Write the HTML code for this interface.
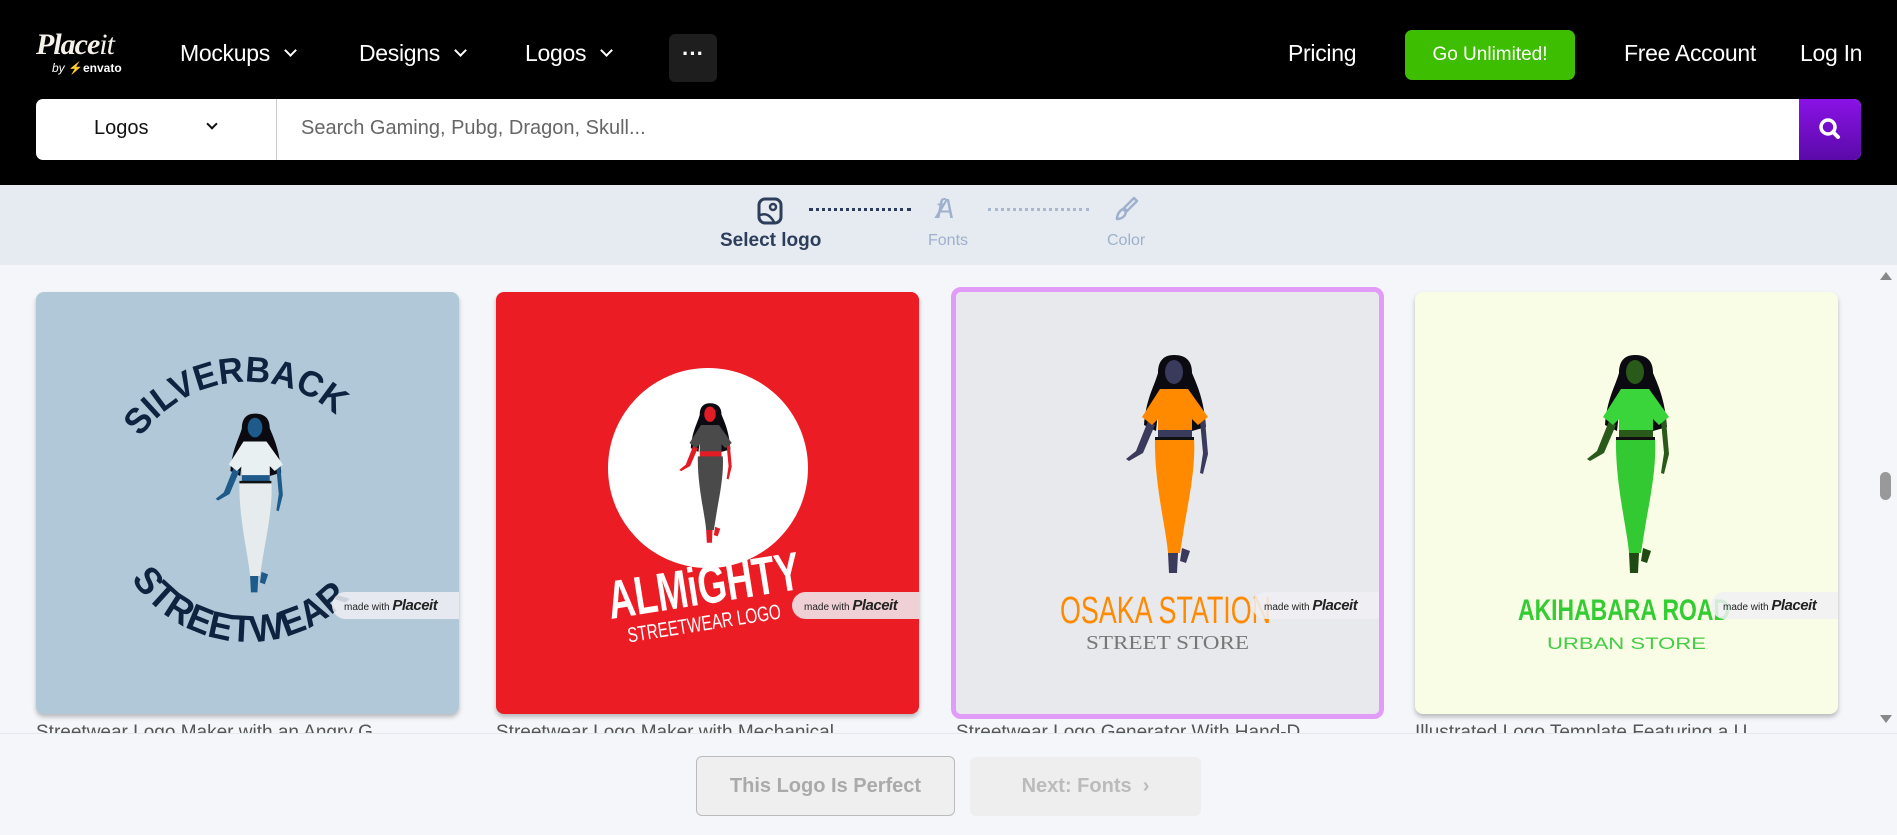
<!DOCTYPE html>
<html><head><meta charset="utf-8">
<style>
*{box-sizing:border-box;margin:0;padding:0}
body{width:1897px;height:835px;overflow:hidden;background:#f4f6fa;font-family:"Liberation Sans",sans-serif;position:relative}
.hdr{position:absolute;left:0;top:0;width:1897px;height:185px;background:#000}
.nav{position:absolute;top:40px;color:#fff;font-size:23px;letter-spacing:-0.3px}
.chev{display:inline-block;width:9px;height:9px;border-right:2px solid #fff;border-bottom:2px solid #fff;transform:rotate(45deg);margin-left:16px;position:relative;top:-6px}
.search{position:absolute;left:36px;top:99px;width:1825px;height:61px;background:#fff;border-radius:7px;overflow:hidden}
.steps{position:absolute;left:0;top:185px;width:1897px;height:80px;background:#e6ebf2}
.card{position:absolute;top:292px;width:423px;height:422px;border-radius:8px;overflow:hidden;box-shadow:0 3px 5px rgba(0,0,0,.25)}
.badge{position:absolute;right:0;top:300px;width:127px;height:27px;background:rgba(240,240,245,.85);border-radius:14px 0 0 14px;font-size:10px;color:#222;line-height:27px;padding-left:12px}
.badge b{font-size:15px;font-style:italic;letter-spacing:-.5px}
.title{position:absolute;top:722px;height:11px;overflow:hidden;font-size:19px;color:#555;white-space:nowrap;line-height:22px}
</style></head><body>
<div class="hdr">
 <div style="position:absolute;left:36px;top:30px;color:#f6f1e8;font-family:'Liberation Serif',serif;font-style:italic;font-weight:bold;font-size:30px;letter-spacing:-1px;line-height:30px">Place<span style="font-weight:normal">it</span></div>
 <div style="position:absolute;left:52px;top:61px;color:#fff;font-size:12px;font-weight:bold"><span style="font-weight:normal;font-style:italic">by</span> <span style="color:#82b541">⚡</span>envato</div>
 <div class="nav" style="left:180px">Mockups<span class="chev"></span></div>
 <div class="nav" style="left:359px">Designs<span class="chev"></span></div>
 <div class="nav" style="left:525px">Logos<span class="chev"></span></div>
 <div style="position:absolute;left:669px;top:34px;width:48px;height:48px;background:#1e1e1e;border-radius:6px;color:#fff;font-size:22px;text-align:center;line-height:40px;font-weight:bold">···</div>
 <div class="nav" style="left:1288px">Pricing</div>
 <div style="position:absolute;left:1405px;top:30px;width:170px;height:50px;background:#3dbe00;border-radius:7px;color:#fff;font-size:19px;text-align:center;line-height:50px">Go Unlimited!</div>
 <div class="nav" style="left:1624px">Free Account</div>
 <div class="nav" style="left:1800px">Log In</div>
 <div class="search">
  <div style="position:absolute;left:58px;top:18px;font-size:20px;color:#111">Logos</div>
  <div style="position:absolute;left:172px;top:21px;width:8px;height:8px;border-right:2px solid #111;border-bottom:2px solid #111;transform:rotate(45deg)"></div>
  <div style="position:absolute;left:240px;top:0;width:1px;height:61px;background:#ccc"></div>
  <div style="position:absolute;left:265px;top:18px;font-size:20px;color:#666">Search Gaming, Pubg, Dragon, Skull...</div>
  <div style="position:absolute;right:0;top:0;width:62px;height:61px;background:linear-gradient(#8a12e6,#5a0aa8)">
   <svg width="62" height="61" viewBox="0 0 62 61"><circle cx="29" cy="28" r="7" fill="none" stroke="#fff" stroke-width="3.5"/><path d="M34 33l5 5" stroke="#fff" stroke-width="4" stroke-linecap="round"/></svg>
  </div>
 </div>
</div>
<div class="steps">
 <svg style="position:absolute;left:756px;top:12px" width="28" height="28" viewBox="0 0 28 28"><rect x="3" y="2" width="22" height="24" rx="6" fill="none" stroke="#2c3e5a" stroke-width="3"/><circle cx="17" cy="10" r="3" fill="none" stroke="#2c3e5a" stroke-width="2.5"/><path d="M4 18c6-2 10 0 14 7" fill="none" stroke="#2c3e5a" stroke-width="2.5"/></svg>
 <div style="position:absolute;left:809px;top:23px;width:102px;border-top:3px dotted #2c3e5a"></div>
 <div style="position:absolute;left:720px;top:45px;font-size:19px;font-weight:bold;color:#2c3e5a">Select logo</div>
 <div style="position:absolute;left:936px;top:8px;font-size:28px;font-style:italic;color:#9eb0cc;letter-spacing:-8px">fA</div>
 <div style="position:absolute;left:928px;top:47px;font-size:16px;color:#9eb0cc">Fonts</div>
 <div style="position:absolute;left:988px;top:23px;width:101px;border-top:3px dotted #a9b8cf"></div>
 <svg style="position:absolute;left:1112px;top:10px" width="28" height="28" viewBox="0 0 28 28"><path d="M22 3l3 3-10 10-3-3z M11 14l3 3c-1 5-5 7-9 7 0-4 2-8 6-10z" fill="none" stroke="#9eb0cc" stroke-width="2.5" stroke-linejoin="round"/></svg>
 <div style="position:absolute;left:1107px;top:47px;font-size:16px;color:#9eb0cc">Color</div>
</div>

<!-- card 1 -->
<div class="card" style="left:36px;background:#b0c8d7">
 <svg width="423" height="422" viewBox="0 0 423 422">
  <defs><path id="a1" d="M100 152 A132 132 0 0 1 324 152"/><path id="a2" d="M92 282 A140 140 0 0 0 332 282"/></defs>
  <text font-family="Liberation Sans" font-weight="bold" font-size="36" fill="#0d2340"><textPath href="#a1" startOffset="8" textLength="222" lengthAdjust="spacingAndGlyphs">SILVERBACK</textPath></text>
  <text font-family="Liberation Sans" font-weight="bold" font-size="38" fill="#0d2340"><textPath href="#a2" startOffset="6" textLength="252" lengthAdjust="spacingAndGlyphs">STREETWEAR</textPath></text>
  <g transform="translate(178,120) scale(0.82)">
   <path d="M50 2c-12 0-16 8-16 18-4 14-12 26-14 52l12 6 4-38h28l4 38 14-4c-2-26-8-40-14-54 0-12-6-18-18-18z" fill="#0a0a10"/>
   <ellipse cx="50" cy="19" rx="9" ry="12" fill="#1e5a8a"/>
   <path d="M24 68l-12 30-10 8 3 2 14-8 12-28z M76 68l3 32-3 20 3 1 5-20-3-34z" fill="#1e5a8a"/>
   <path d="M34 76h34v10H34z" fill="#1e5a8a"/>
   <path d="M36 36h28l20 28-10 8-6-6v11H34V66l-6 6-10-8z" fill="#e9f0f2"/>
   <path d="M31 85h39c2 30-6 65-10 90l-4 25H44c-2-25-14-70-13-115z" fill="#e6ebee"/>
   <path d="M31 84h39v3H31z" fill="#111"/>
   <path d="M44 200h10l-1 20h-8z M58 195l8 3-4 12-6-2z" fill="#1e5a8a"/>
  </g>
 </svg>
 <div class="badge">made with <b>Placeit</b></div>
</div>
<!-- card 2 -->
<div class="card" style="left:496px;background:#ec1c24">
 <svg width="423" height="422" viewBox="0 0 423 422">
  <circle cx="212" cy="176" r="100" fill="#fff"/>
  <g transform="translate(182,110) scale(0.64)">
   <path d="M50 2c-12 0-16 8-16 18-4 14-12 26-14 52l12 6 4-38h28l4 38 14-4c-2-26-8-40-14-54 0-12-6-18-18-18z" fill="#0a0a10"/>
   <ellipse cx="50" cy="19" rx="9" ry="12" fill="#e21c24"/>
   <path d="M24 68l-12 30-10 8 3 2 14-8 12-28z M76 68l3 32-3 20 3 1 5-20-3-34z" fill="#e21c24"/>
   <path d="M34 76h34v10H34z" fill="#e21c24"/>
   <path d="M36 36h28l20 28-10 8-6-6v11H34V66l-6 6-10-8z" fill="#4a4a4a"/>
   <path d="M31 85h39c2 30-6 65-10 90l-4 25H44c-2-25-14-70-13-115z" fill="#4a4a4a"/>
   <path d="M44 200h10l-1 20h-8z M58 195l8 3-4 12-6-2z" fill="#e21c24"/>
  </g>
  <g transform="rotate(-9 209 308)">
   <text x="113" y="312" font-family="Liberation Sans" font-weight="bold" font-size="54" fill="#fff" textLength="194" lengthAdjust="spacingAndGlyphs">ALMiGHTY</text>
   <text x="127" y="338" font-family="Liberation Sans" font-size="21" fill="#fff" textLength="155" lengthAdjust="spacingAndGlyphs">STREETWEAR LOGO</text>
  </g>
 </svg>
 <div class="badge">made with <b>Placeit</b></div>
</div>
<!-- card 3 selected -->
<div style="position:absolute;left:951px;top:287px;width:433px;height:432px;border:5px solid #e09cf6;border-radius:10px"></div>
<div class="card" style="left:956px;background:#e8e9ec;box-shadow:none;border-radius:5px">
 <svg width="423" height="422" viewBox="0 0 423 422">
  <g transform="translate(168,61)">
   <path d="M50 2c-12 0-16 8-16 18-4 14-12 26-14 52l12 6 4-38h28l4 38 14-4c-2-26-8-40-14-54 0-12-6-18-18-18z" fill="#0a0a10"/>
   <ellipse cx="50" cy="19" rx="9" ry="12" fill="#3a3a5c"/>
   <path d="M24 68l-12 30-10 8 3 2 14-8 12-28z M76 68l3 32-3 20 3 1 5-20-3-34z" fill="#3a3a5c"/>
   <path d="M34 76h34v10H34z" fill="#3a3a5c"/>
   <path d="M36 36h28l20 28-10 8-6-6v11H34V66l-6 6-10-8z" fill="#ff8a00"/>
   <path d="M31 85h39c2 30-6 65-10 90l-4 25H44c-2-25-14-70-13-115z" fill="#ff8a00"/>
   <path d="M31 84h39v3H31z" fill="#111"/>
   <path d="M44 200h10l-1 20h-8z M58 195l8 3-4 12-6-2z" fill="#3a3a5c"/>
  </g>
  <text x="104" y="331" font-family="Liberation Sans" font-size="38" fill="#ff8a00" textLength="211" lengthAdjust="spacingAndGlyphs">OSAKA STATION</text>
  <text x="130" y="357" font-family="Liberation Serif" font-size="20" fill="#777" textLength="163" lengthAdjust="spacingAndGlyphs">STREET STORE</text>
 </svg>
 <div class="badge">made with <b>Placeit</b></div>
</div>
<!-- card 4 -->
<div class="card" style="left:1415px;background:#fafde6">
 <svg width="423" height="422" viewBox="0 0 423 422">
  <g transform="translate(170,61)">
   <path d="M50 2c-12 0-16 8-16 18-4 14-12 26-14 52l12 6 4-38h28l4 38 14-4c-2-26-8-40-14-54 0-12-6-18-18-18z" fill="#0a0a10"/>
   <ellipse cx="50" cy="19" rx="9" ry="12" fill="#2a5a1a"/>
   <path d="M24 68l-12 30-10 8 3 2 14-8 12-28z M76 68l3 32-3 20 3 1 5-20-3-34z" fill="#2a5a1a"/>
   <path d="M34 76h34v10H34z" fill="#2a5a1a"/>
   <path d="M36 36h28l20 28-10 8-6-6v11H34V66l-6 6-10-8z" fill="#3ad53a"/>
   <path d="M31 85h39c2 30-6 65-10 90l-4 25H44c-2-25-14-70-13-115z" fill="#33c933"/>
   <path d="M31 84h39v3H31z" fill="#111"/>
   <path d="M44 200h10l-1 20h-8z M58 195l8 3-4 12-6-2z" fill="#1f4a14"/>
  </g>
  <text x="103" y="328" font-family="Liberation Sans" font-weight="bold" font-size="30" fill="#33cc33" textLength="212" lengthAdjust="spacingAndGlyphs">AKIHABARA ROAD</text>
  <text x="132" y="357" font-family="Liberation Sans" font-size="17" fill="#44cc44" textLength="159" lengthAdjust="spacingAndGlyphs">URBAN STORE</text>
 </svg>
 <div class="badge">made with <b>Placeit</b></div>
</div>

<div class="title" style="left:36px">Streetwear Logo Maker with an Angry G</div>
<div class="title" style="left:496px">Streetwear Logo Maker with Mechanical</div>
<div class="title" style="left:956px">Streetwear Logo Generator With Hand-D</div>
<div class="title" style="left:1415px">Illustrated Logo Template Featuring a U</div>

<div style="position:absolute;left:1875px;top:265px;width:22px;height:468px;background:#f4f6fa"></div>
<div style="position:absolute;left:1880px;top:272px;width:0;height:0;border-left:6px solid transparent;border-right:6px solid transparent;border-bottom:8px solid #888"></div>
<div style="position:absolute;left:1880px;top:715px;width:0;height:0;border-left:6px solid transparent;border-right:6px solid transparent;border-top:8px solid #888"></div>
<div style="position:absolute;left:1880px;top:472px;width:11px;height:28px;background:#999;border-radius:6px"></div>

<div style="position:absolute;left:0;top:733px;width:1897px;height:102px;background:#f4f6fa;border-top:1px solid #e4e8ef"></div>
<div style="position:absolute;left:696px;top:756px;width:259px;height:60px;border:1px solid #bbb;background:#efefef;border-radius:6px;color:#aaa;font-size:20px;font-weight:bold;text-align:center;line-height:58px">This Logo Is Perfect</div>
<div style="position:absolute;left:970px;top:757px;width:231px;height:59px;background:#eeeeee;border-radius:6px;color:#bbb;font-size:20px;font-weight:bold;text-align:center;line-height:58px">Next: Fonts &nbsp;›</div>
</body></html>
